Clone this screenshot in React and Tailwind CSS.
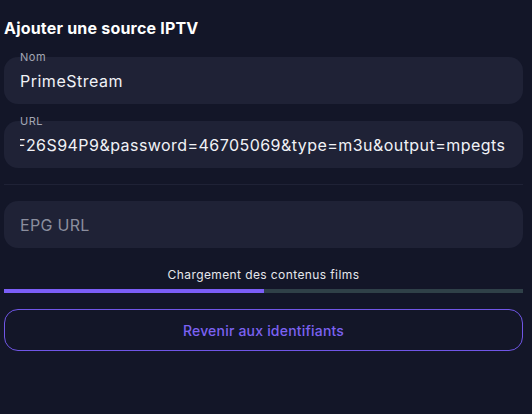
import React from "react";

function Field({ label, children }) {
  return (
    <div className="relative h-[47px] rounded-[14px] bg-[#1f2236] flex items-center px-4">
      {label && (
        <span className="absolute left-4 top-[-7px] text-[11px] leading-[14px] tracking-[0.5px] text-[#a3a6b4]">
          {label}
        </span>
      )}
      {children}
    </div>
  );
}

export default function App() {
  return (
    <div className="min-h-screen bg-[#131628] pl-1 pr-[9px] pt-[18px] font-['Inter','Noto_Sans',sans-serif]">
      <h2 className="text-[16px] leading-[21px] font-bold text-white tracking-[0.2px]">
        Ajouter une source IPTV
      </h2>
      <div className="mt-[18px]">
        <Field label="Nom">
          <span className="text-[16px] leading-[20px] tracking-[0.5px] text-[#f1f2f6]">PrimeStream</span>
        </Field>
      </div>
      <div className="mt-[17px]">
        <Field label="URL">
          <div className="overflow-hidden w-full">
            <span className="block whitespace-nowrap ml-[-4px] text-[16px] leading-[20px] tracking-[0.45px] text-[#f1f2f6]">
              F26S94P9&amp;password=46705069&amp;type=m3u&amp;output=mpegts
            </span>
          </div>
        </Field>
      </div>
      <div className="mt-[16px] h-px bg-[#1f2236]" />
      <div className="mt-[16px]">
        <Field>
          <span className="text-[16px] leading-[20px] tracking-[0.3px] text-[#8b8e9e]">EPG URL</span>
        </Field>
      </div>
      <p className="mt-[19px] text-center text-[12px] leading-[16px] text-[#e6e7ec] tracking-[0.4px]">
        Chargement des contenus films
      </p>
      <div className="mt-[6px] h-[4px] bg-[#2f4048] flex">
        <div className="h-full bg-[#7b5ef7]" style={{ width: "50%" }} />
      </div>
      <button className="mt-[16px] w-full h-[42px] rounded-[14px] border border-[#7056e6] text-[14px] font-medium tracking-[0.2px] text-[#7c62f2]">
        Revenir aux identifiants
      </button>
    </div>
  );
}
